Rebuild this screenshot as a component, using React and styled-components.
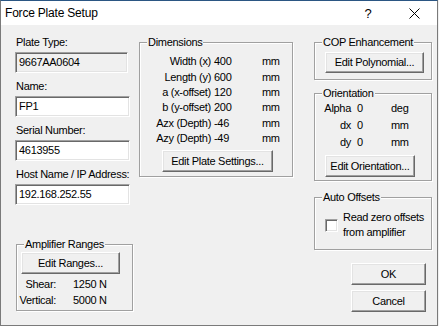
import React from 'react';
import styled, { createGlobalStyle } from 'styled-components';

const Global = createGlobalStyle`
  html, body { margin: 0; padding: 0; background: #f0f0f0; }
  body {
    font-family: "Liberation Sans", Arial, sans-serif;
    font-size: 11px;
    letter-spacing: -0.3px;
    color: #000;
  }
  * { box-sizing: border-box; }
`;

const Window = styled.div`
  width: 438px;
  height: 326px;
  background: #f0f0f0;
  border: 1px solid #7a7a7a;
  border-top-color: #2b5683;
  display: flex;
  flex-direction: column;
  overflow: hidden;
`;

const TitleBar = styled.div`
  height: 24px;
  flex: none;
  background: #fff;
  display: flex;
  align-items: center;
  padding-left: 4px;
`;

const Title = styled.div`
  flex: 1;
  font-family: "Liberation Sans", Arial, sans-serif;
  font-size: 12px;
  letter-spacing: -0.2px;
  color: #000;
`;

const CaptionButton = styled.div`
  width: 46px;
  height: 24px;
  display: flex;
  align-items: center;
  justify-content: center;
  font-family: "Liberation Sans", Arial, sans-serif;
  font-size: 13px;
  letter-spacing: 0;
  color: #000;
`;

const Body = styled.div`
  flex: 1;
  display: flex;
  align-items: flex-start;
  padding-left: 14px;
`;

const LeftColumn = styled.div`
  width: 118px;
  display: flex;
  flex-direction: column;
  padding-top: 11px;
`;

const MiddleColumn = styled.div`
  width: 154px;
  margin-left: 6px;
  padding-top: 17px;
  display: flex;
  flex-direction: column;
`;

const RightColumn = styled.div`
  width: 118px;
  margin-left: 21px;
  padding-top: 17px;
  display: flex;
  flex-direction: column;
`;

const FieldLabel = styled.div`
  line-height: 13px;
  height: 13px;
  padding-left: 1px;
  margin-bottom: 3px;
  white-space: nowrap;
`;

const TextBox = styled.div`
  width: ${(p) => p.$w}px;
  height: 21px;
  margin-bottom: 7px;
  background: ${(p) => (p.$disabled ? '#f0f0f0' : '#fff')};
  border: 1px solid;
  border-color: #a0a0a0 #fff #fff #a0a0a0;
  box-shadow: inset 1px 1px 0 #696969, inset -1px -1px 0 #e3e3e3;
  padding-left: 3px;
  display: flex;
  align-items: center;
  line-height: 13px;
  white-space: nowrap;
`;

const Group = styled.div`
  position: relative;
  border: 1px solid #a0a0a0;
  box-shadow: inset 1px 1px 0 #fff, 1px 1px 0 #fff;
  margin-top: ${(p) => p.$mt || 0}px;
  margin-left: ${(p) => p.$ml || 0}px;
  padding: ${(p) => p.$pad};
  display: flex;
  flex-direction: column;
`;

const Legend = styled.span`
  position: absolute;
  top: -7px;
  left: 7px;
  padding: 0 1px;
  line-height: 13px;
  background: #f0f0f0;
  white-space: nowrap;
`;

const Button = styled.button`
  width: ${(p) => p.$w}px;
  height: ${(p) => p.$h || 22}px;
  flex: none;
  margin: 0;
  padding: 0;
  background: #f0f0f0;
  border: 1px solid;
  border-color: #fff #696969 #696969 #fff;
  box-shadow: inset -1px -1px 0 #a0a0a0, inset 1px 1px 0 #e3e3e3;
  font-family: "Liberation Sans", Arial, sans-serif;
  font-size: 11px;
  letter-spacing: -0.3px;
  color: #000;
  line-height: 13px;
  white-space: nowrap;
`;

const ButtonRow = styled.div`
  display: flex;
  padding-left: ${(p) => p.$pl || 0}px;
  margin-top: ${(p) => p.$mt || 0}px;
`;

const ValueGrid = styled.div`
  display: grid;
  grid-template-columns: ${(p) => p.$cols};
  grid-auto-rows: ${(p) => p.$row}px;
  align-items: center;
  margin-top: ${(p) => p.$mt || 0}px;
  line-height: 13px;
  white-space: nowrap;
`;

const Key = styled.span`
  text-align: right;
  padding-right: ${(p) => p.$gap}px;
`;

const Val = styled.span``;

const CheckRow = styled.div`
  display: flex;
  align-items: center;
  gap: 5px;
  padding-left: 10px;
`;

const CheckBox = styled.span`
  width: 13px;
  height: 13px;
  flex: none;
  background: #fff;
  border: 1px solid;
  border-color: #a0a0a0 #fff #fff #a0a0a0;
  box-shadow: inset 1px 1px 0 #696969, inset -1px -1px 0 #e3e3e3;
`;

const CheckText = styled.div`
  line-height: 15px;
`;

const DialogButtons = styled.div`
  display: flex;
  flex-direction: column;
  align-items: flex-end;
  gap: 5px;
  margin-top: 13px;
  padding-right: 6px;
`;

const dims = [
  ['Width (x)', '400'],
  ['Length (y)', '600'],
  ['a (x-offset)', '120'],
  ['b (y-offset)', '200'],
  ['Azx (Depth)', '-46'],
  ['Azy (Depth)', '-49'],
];

const orient = [
  ['Alpha', '0', 'deg'],
  ['dx', '0', 'mm'],
  ['dy', '0', 'mm'],
];

const fields = [
  ['Plate Type:', '9667AA0604', true],
  ['Name:', 'FP1'],
  ['Serial Number:', '4613955'],
  ['Host Name / IP Address:', '192.168.252.55'],
];

export default function App() {
  return (
    <>
      <Global />
      <Window>
        <TitleBar>
          <Title>Force Plate Setup</Title>
          <CaptionButton>?</CaptionButton>
          <CaptionButton>
            <svg width="11" height="11" viewBox="0 0 11 11">
              <path d="M0.5 0.5 L10.5 10.5 M10.5 0.5 L0.5 10.5" stroke="#000" strokeWidth="1" fill="none" />
            </svg>
          </CaptionButton>
        </TitleBar>
        <Body>
          <LeftColumn>
            {fields.map(([label, value, disabled]) => (
              <React.Fragment key={label}>
                <FieldLabel>{label}</FieldLabel>
                <TextBox $w={disabled ? 113 : 115} $disabled={disabled}>
                  {value}
                </TextBox>
              </React.Fragment>
            ))}
            <Group $mt={32} $ml={1} $pad="7px 0 2px 0">
              <Legend>Amplifier Ranges</Legend>
              <ButtonRow $pl={4}>
                <Button $w={99}>Edit Ranges...</Button>
              </ButtonRow>
              <ValueGrid $cols="56px 1fr" $row={16} $mt={2}>
                <Key $gap={17}>Shear:</Key>
                <Val>1250 N</Val>
                <Key $gap={17}>Vertical:</Key>
                <Val>5000 N</Val>
              </ValueGrid>
            </Group>
          </LeftColumn>

          <MiddleColumn>
            <Group $pad="11px 0 4px 0">
              <Legend>Dimensions</Legend>
              <ValueGrid $cols="74px 48px 1fr" $row={15.4}>
                {dims.map(([k, v]) => (
                  <React.Fragment key={k}>
                    <Key $gap={3}>{k}</Key>
                    <Val>{v}</Val>
                    <Val>mm</Val>
                  </React.Fragment>
                ))}
              </ValueGrid>
              <ButtonRow $pl={22} $mt={4}>
                <Button $w={111}>Edit Plate Settings...</Button>
              </ButtonRow>
            </Group>
          </MiddleColumn>

          <RightColumn>
            <Group $pad="9px 0 6px 0">
              <Legend>COP Enhancement</Legend>
              <ButtonRow $pl={10}>
                <Button $w={99} $h={21}>Edit Polynomial...</Button>
              </ButtonRow>
            </Group>

            <Group $mt={13} $pad="6px 0 3px 0">
              <Legend>Orientation</Legend>
              <ValueGrid $cols="42px 34px 1fr" $row={17}>
                {orient.map(([k, v, u]) => (
                  <React.Fragment key={k}>
                    <Key $gap={6}>{k}</Key>
                    <Val>{v}</Val>
                    <Val>{u}</Val>
                  </React.Fragment>
                ))}
              </ValueGrid>
              <ButtonRow $pl={10} $mt={4}>
                <Button $w={90}>Edit Orientation...</Button>
              </ButtonRow>
            </Group>

            <Group $mt={16} $pad="12px 0 9px 0">
              <Legend>Auto Offsets</Legend>
              <CheckRow>
                <CheckBox />
                <CheckText>
                  Read zero offsets
                  <br />
                  from amplifier
                </CheckText>
              </CheckRow>
            </Group>

            <DialogButtons>
              <Button $w={75}>OK</Button>
              <Button $w={75}>Cancel</Button>
            </DialogButtons>
          </RightColumn>
        </Body>
      </Window>
    </>
  );
}
